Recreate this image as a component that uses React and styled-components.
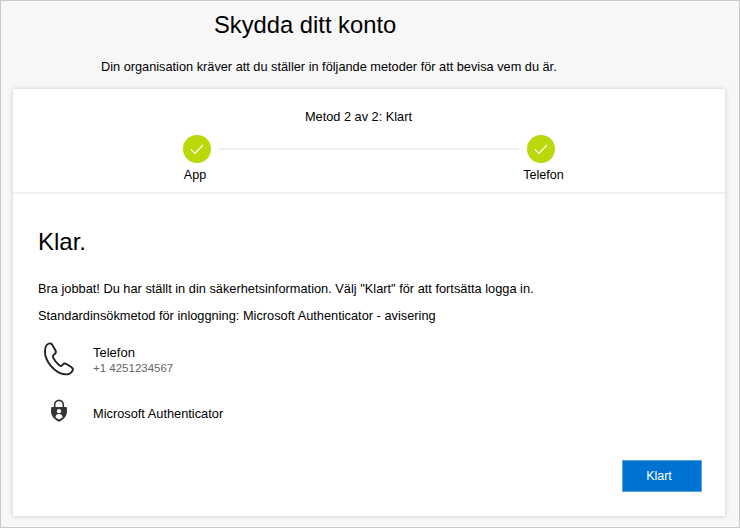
import React from "react";
import styled, { createGlobalStyle } from "styled-components";

const GlobalStyle = createGlobalStyle`
  html, body {
    margin: 0;
    padding: 0;
    background: #fff;
  }
  body {
    font-family: "Liberation Sans", Arial, sans-serif;
    color: #000;
  }
`;

const Frame = styled.div`
  box-sizing: border-box;
  width: 740px;
  height: 528px;
  padding: 0 13px;
  background: #f7f7f7;
  border: 1px solid #c8c8c8;
  display: flex;
  flex-direction: column;
`;

const Header = styled.header`
  height: 88px;
  flex: none;
  display: flex;
  flex-direction: column;
`;

const Title = styled.h1`
  margin: 10px 0 0 200px;
  font-size: 23.75px;
  line-height: 28px;
  font-weight: 400;
`;

const Subtitle = styled.p`
  margin: 19px 0 0 87px;
  font-size: 12.75px;
  line-height: 18px;
`;

const Card = styled.main`
  width: 712px;
  height: 427px;
  margin-left: -1px;
  flex: none;
  background: #fff;
  box-shadow: 0 0 5px rgba(0, 0, 0, 0.18);
  display: flex;
  flex-direction: column;
`;

const Progress = styled.section`
  height: 105px;
  flex: none;
  box-sizing: border-box;
  padding-top: 20px;
  border-bottom: 2px solid #efefef;
  display: flex;
  flex-direction: column;
  align-items: center;
`;

const StepTitle = styled.div`
  margin-right: 21px;
  font-size: 12.75px;
  line-height: 16px;
`;

const Steps = styled.div`
  width: 372px;
  margin-top: 10px;
  display: grid;
  grid-template-columns: 28px 1fr 28px;
  column-gap: 8px;
  row-gap: 4px;
  align-items: center;
`;

const Bubble = styled.div`
  width: 28px;
  height: 28px;
  border-radius: 50%;
  background: #bad80a;
  display: flex;
  align-items: center;
  justify-content: center;
`;

const Track = styled.div`
  height: 2px;
  background: #efefef;
`;

const StepLabel = styled.div`
  grid-row: 2;
  grid-column: ${(p) => p.$col};
  justify-self: center;
  margin: ${(p) => p.$margin};
  white-space: nowrap;
  font-size: 12.6px;
  line-height: 16px;
`;

const Body = styled.section`
  flex: 1;
  padding: 34px 23px 0 25px;
  display: flex;
  flex-direction: column;
`;

const Heading = styled.h2`
  margin: 0;
  font-size: 24px;
  line-height: 28px;
  font-weight: 400;
`;

const Line = styled.p`
  margin: ${(p) => p.$top}px 0 0;
  font-size: 12.8px;
  line-height: 16px;
`;

const Method = styled.div`
  margin-top: ${(p) => p.$top}px;
  height: ${(p) => p.$h}px;
  display: flex;
  align-items: center;
`;

const MethodIcon = styled.div`
  width: 55px;
  flex: none;
  box-sizing: border-box;
  padding-left: ${(p) => p.$pad || 0}px;
  margin-bottom: ${(p) => p.$lift || 0}px;
  display: flex;
`;

const MethodText = styled.div`
  margin-top: ${(p) => p.$drop || 0}px;
`;

const MethodName = styled.div`
  font-size: ${(p) => p.$size}px;
  line-height: 16px;
`;

const MethodDetail = styled.div`
  font-size: 11.5px;
  line-height: 15px;
  color: #666;
`;

const Actions = styled.div`
  margin-top: auto;
  padding-bottom: 24px;
  display: flex;
  justify-content: flex-end;
`;

const DoneButton = styled.button`
  width: 80px;
  height: 32px;
  border: 1px solid #5ea3e4;
  background: #0072d2;
  color: #fff;
  font-family: inherit;
  font-size: 12.5px;
  padding: 0 6px 0 0;
`;

const Check = () => (
  <svg width="16" height="16" viewBox="0 0 16 16" fill="none">
    <path d="M2 8.5l4 4 8-8.5" stroke="#fff" strokeWidth="1.1" />
  </svg>
);

const PhoneIcon = () => (
  <svg width="44" height="44" viewBox="0 0 44 44" fill="none">
    <path
      d="M10 7c2-1.2 3.5-.5 4.5 1.2l3 5.3c.7 1.4.4 2.6-.8 3.6l-1.2 1c-.8.7-.9 1.6-.4 2.6 1.5 3 3.6 5.5 6.4 7.7.9.7 1.8.6 2.5-.1l1-1c1-1 2.3-1.1 3.5-.3l5 3.3c1.3.9 1.7 2.2 1 3.4-1.4 2.3-4.2 4-7.5 3.6C17 36.5 6.5 24 7 14c.2-3.3 1-6 3-7z"
      stroke="#222"
      strokeWidth="1.9"
      strokeLinejoin="round"
    />
  </svg>
);

const AuthIcon = () => (
  <svg width="18" height="25" viewBox="0 0 20 26">
    <path
      d="M5.2 9V6.5a4.8 4.8 0 0 1 9.6 0V9"
      fill="none"
      stroke="#333"
      strokeWidth="1.8"
    />
    <path
      d="M2 9h16c.4 0 .8.4.8.8V14c0 5-3.4 8.6-8.8 11.6C4.6 22.6 1.2 19 1.2 14V9.8c0-.4.4-.8.8-.8z"
      fill="#333"
    />
    <circle cx="10" cy="13.8" r="2.4" fill="#fff" />
    <path d="M6 20.4c.4-2.4 1.8-3.6 4-3.6s3.6 1.2 4 3.6c-1.2 1-2.5 1.8-4 2.6-1.5-.8-2.8-1.6-4-2.6z" fill="#fff" />
  </svg>
);

export default function App() {
  return (
    <>
      <GlobalStyle />
      <Frame>
        <Header>
          <Title>Skydda ditt konto</Title>
          <Subtitle>Din organisation kräver att du ställer in följande metoder för att bevisa vem du är.</Subtitle>
        </Header>
        <Card>
          <Progress>
            <StepTitle>Metod 2 av 2: Klart</StepTitle>
            <Steps>
              <Bubble><Check /></Bubble>
              <Track />
              <Bubble><Check /></Bubble>
              <StepLabel $col={1} $margin="0 4px 0 0">App</StepLabel>
              <StepLabel $col={3} $margin="0 0 0 5px">Telefon</StepLabel>
            </Steps>
          </Progress>
          <Body>
            <Heading>Klar.</Heading>
            <Line $top={25}>Bra jobbat! Du har ställt in din säkerhetsinformation. Välj "Klart" för att fortsätta logga in.</Line>
            <Line $top={11}>Standardinsökmetod för inloggning: Microsoft Authenticator - avisering</Line>
            <Method $top={13} $h={44}>
              <MethodIcon><PhoneIcon /></MethodIcon>
              <MethodText $drop={2}>
                <MethodName $size={13}>Telefon</MethodName>
                <MethodDetail>+1 4251234567</MethodDetail>
              </MethodText>
            </Method>
            <Method $top={15} $h={34}>
              <MethodIcon $pad={12} $lift={6}><AuthIcon /></MethodIcon>
              <MethodText $drop={2}>
                <MethodName $size={12.8}>Microsoft Authenticator</MethodName>
              </MethodText>
            </Method>
            <Actions>
              <DoneButton>Klart</DoneButton>
            </Actions>
          </Body>
        </Card>
      </Frame>
    </>
  );
}
